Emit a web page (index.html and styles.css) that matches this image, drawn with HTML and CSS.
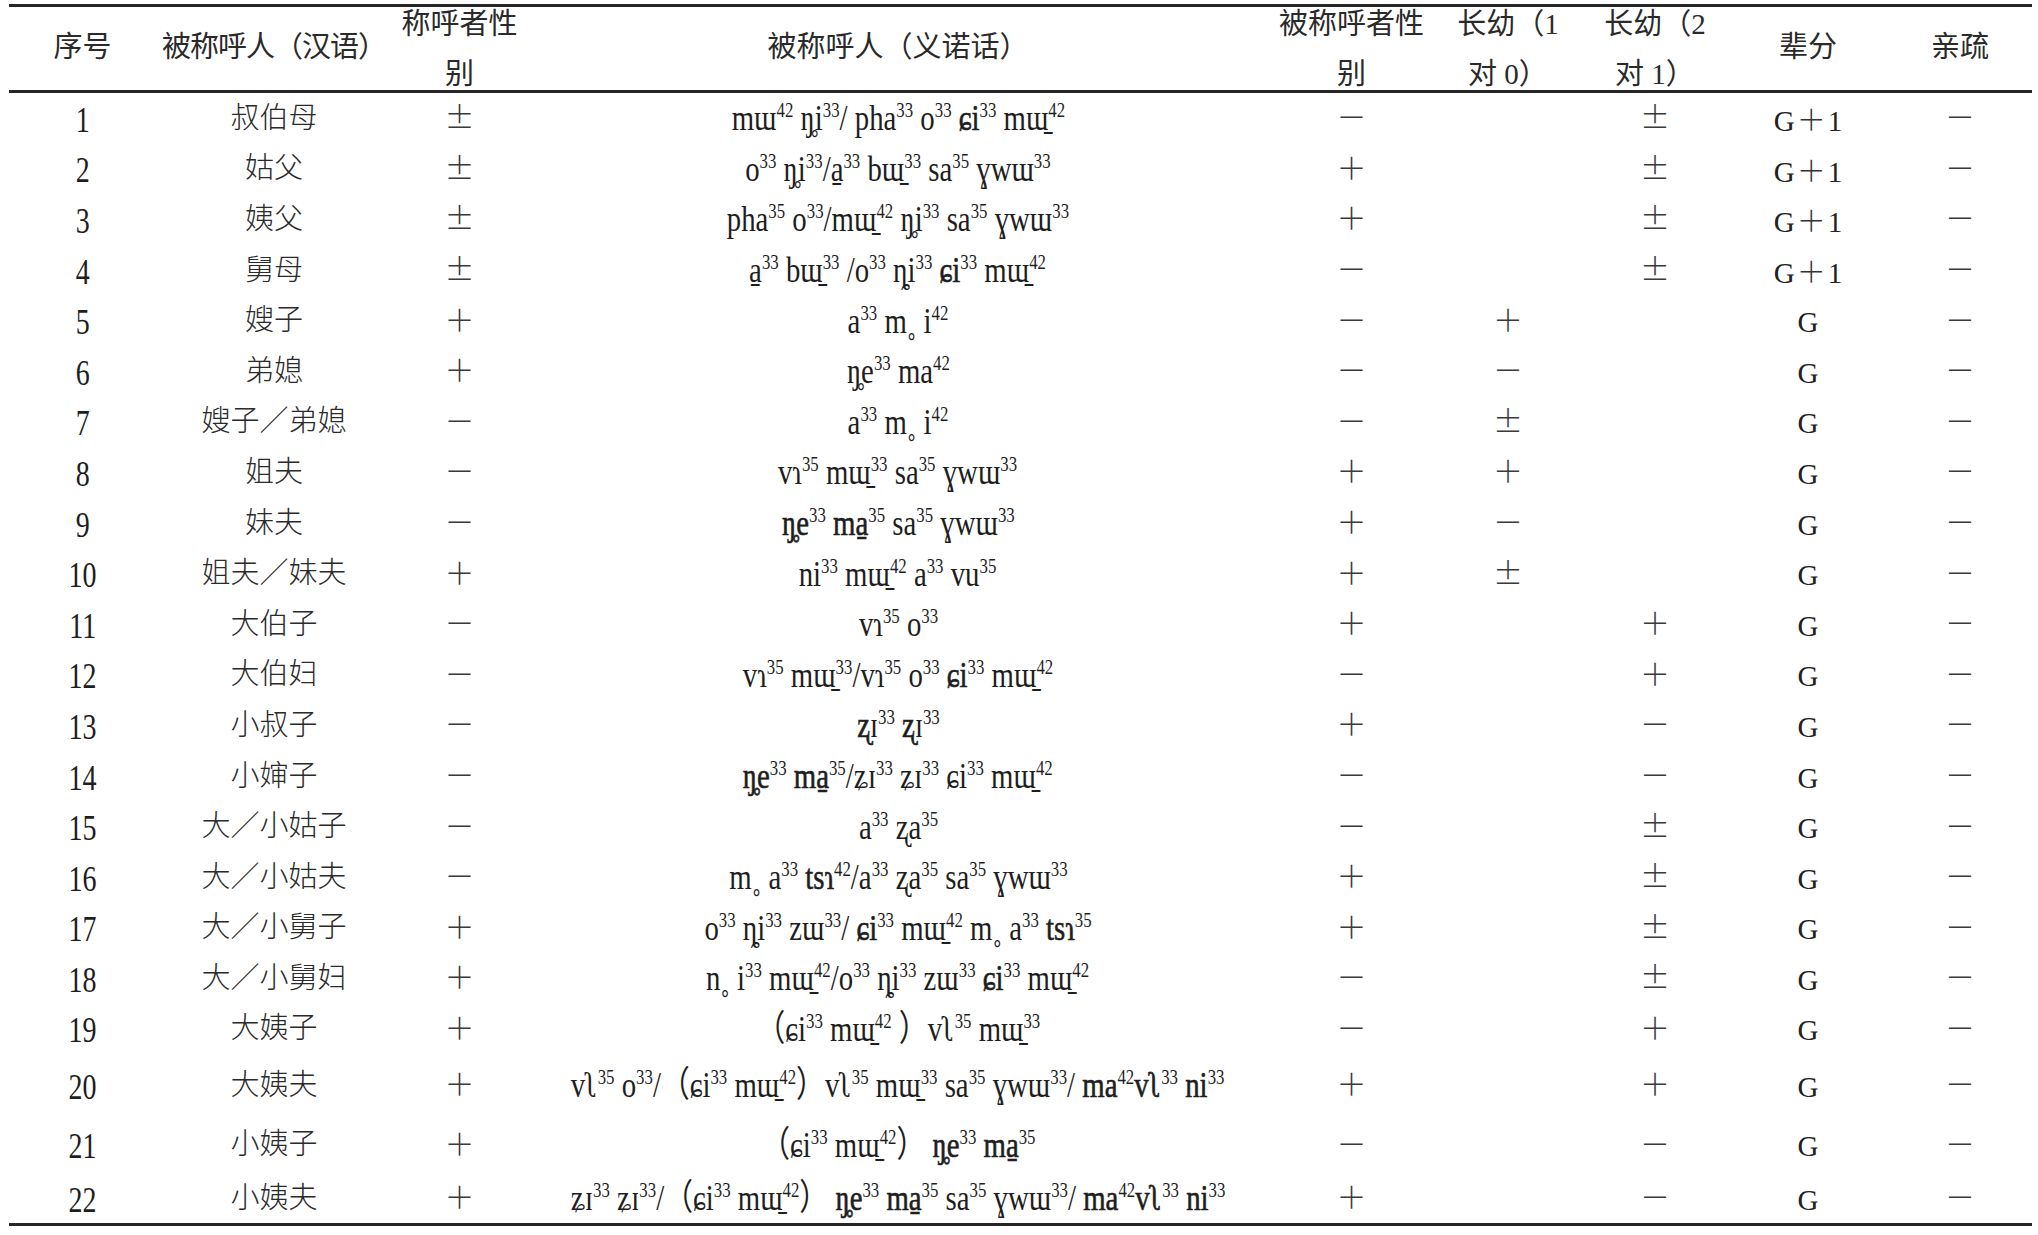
FILE: index.html
```html
<!DOCTYPE html>
<html lang="zh-CN">
<head>
<meta charset="utf-8">
<title>称呼表</title>
<link rel="stylesheet" href="styles.css">
</head>
<body>
<table class="kin">
  <colgroup>
    <col class="c1"><col class="c2"><col class="c3"><col class="c4"><col class="c5"><col class="c6"><col class="c7"><col class="c8"><col class="c9">
  </colgroup>
  <thead>
    <tr>
      <th><div class="hd">序号</div></th>
      <th><div class="hd h-tight">被称呼人（汉语）</div></th>
      <th><div class="hd"><span>称呼者性<br>别</span></div></th>
      <th><div class="hd">被称呼人（义诺话）</div></th>
      <th><div class="hd"><span>被称呼者性<br>别</span></div></th>
      <th><div class="hd"><span>长幼（1<br>对 0）</span></div></th>
      <th><div class="hd"><span>长幼（2<br>对 1）</span></div></th>
      <th><div class="hd">辈分</div></th>
      <th><div class="hd">亲疏</div></th>
    </tr>
  </thead>
  <tbody>
    <tr><td class="num"><span>1</span></td><td class="zh">叔伯母</td><td class="s">±</td><td class="ipa"><div class="line"><span class="t">mɯ<sup>42</sup> ŋ̥i<sup>33</sup>/ pha<sup>33</sup> o<sup>33</sup> <span class="bd">ɕi</span><sup>33</sup> mɯ̱<sup>42</sup></span></div></td><td class="s">－</td><td class="s"></td><td class="s">±</td><td class="g">G<span class="pl">＋</span>1</td><td class="s">－</td></tr>
    <tr><td class="num"><span>2</span></td><td class="zh">姑父</td><td class="s">±</td><td class="ipa"><div class="line"><span class="t">o<sup>33</sup> ŋ̥i<sup>33</sup>/a̱<sup>33</sup> bɯ̱<sup>33</sup> sa<sup>35</sup> ɣwɯ<sup>33</sup></span></div></td><td class="s">＋</td><td class="s"></td><td class="s">±</td><td class="g">G<span class="pl">＋</span>1</td><td class="s">－</td></tr>
    <tr><td class="num"><span>3</span></td><td class="zh">姨父</td><td class="s">±</td><td class="ipa"><div class="line"><span class="t">pha<sup>35</sup> o<sup>33</sup>/mɯ̱<sup>42</sup> ŋ̥i<sup>33</sup> sa<sup>35</sup> ɣwɯ<sup>33</sup></span></div></td><td class="s">＋</td><td class="s"></td><td class="s">±</td><td class="g">G<span class="pl">＋</span>1</td><td class="s">－</td></tr>
    <tr><td class="num"><span>4</span></td><td class="zh">舅母</td><td class="s">±</td><td class="ipa"><div class="line"><span class="t">a̱<sup>33</sup> bɯ̱<sup>33</sup> /o<sup>33</sup> ȵi<sup>33</sup> <span class="bd">ɕi</span><sup>33</sup> mɯ̱<sup>42</sup></span></div></td><td class="s">－</td><td class="s"></td><td class="s">±</td><td class="g">G<span class="pl">＋</span>1</td><td class="s">－</td></tr>
    <tr><td class="num"><span>5</span></td><td class="zh">嫂子</td><td class="s">＋</td><td class="ipa"><div class="line"><span class="t">a<sup>33</sup> m˳ i<sup>42</sup></span></div></td><td class="s">－</td><td class="s">＋</td><td class="s"></td><td class="g">G</td><td class="s">－</td></tr>
    <tr><td class="num"><span>6</span></td><td class="zh">弟媳</td><td class="s">＋</td><td class="ipa"><div class="line"><span class="t">ŋ̥e<sup>33</sup> ma<sup>42</sup></span></div></td><td class="s">－</td><td class="s">－</td><td class="s"></td><td class="g">G</td><td class="s">－</td></tr>
    <tr><td class="num"><span>7</span></td><td class="zh">嫂子／弟媳</td><td class="s">－</td><td class="ipa"><div class="line"><span class="t">a<sup>33</sup> m˳ i<sup>42</sup></span></div></td><td class="s">－</td><td class="s">±</td><td class="s"></td><td class="g">G</td><td class="s">－</td></tr>
    <tr><td class="num"><span>8</span></td><td class="zh">姐夫</td><td class="s">－</td><td class="ipa"><div class="line"><span class="t">vɿ<sup>35</sup> mɯ̱<sup>33</sup> sa<sup>35</sup> ɣwɯ<sup>33</sup></span></div></td><td class="s">＋</td><td class="s">＋</td><td class="s"></td><td class="g">G</td><td class="s">－</td></tr>
    <tr><td class="num"><span>9</span></td><td class="zh">妹夫</td><td class="s">－</td><td class="ipa"><div class="line"><span class="t"><span class="bd">ŋ̥e</span><sup>33</sup> <span class="bd">ma̱</span><sup>35</sup> sa<sup>35</sup> ɣwɯ<sup>33</sup></span></div></td><td class="s">＋</td><td class="s">－</td><td class="s"></td><td class="g">G</td><td class="s">－</td></tr>
    <tr><td class="num"><span>10</span></td><td class="zh">姐夫／妹夫</td><td class="s">＋</td><td class="ipa"><div class="line"><span class="t">ni<sup>33</sup> mɯ̱<sup>42</sup> a<sup>33</sup> vu<sup>35</sup></span></div></td><td class="s">＋</td><td class="s">±</td><td class="s"></td><td class="g">G</td><td class="s">－</td></tr>
    <tr><td class="num"><span>11</span></td><td class="zh">大伯子</td><td class="s">－</td><td class="ipa"><div class="line"><span class="t">vɿ<sup>35</sup> o<sup>33</sup></span></div></td><td class="s">＋</td><td class="s"></td><td class="s">＋</td><td class="g">G</td><td class="s">－</td></tr>
    <tr><td class="num"><span>12</span></td><td class="zh">大伯妇</td><td class="s">－</td><td class="ipa"><div class="line"><span class="t">vɿ<sup>35</sup> mɯ̱<sup>33</sup>/vɿ<sup>35</sup> o<sup>33</sup> <span class="bd">ɕi</span><sup>33</sup> mɯ̱<sup>42</sup></span></div></td><td class="s">－</td><td class="s"></td><td class="s">＋</td><td class="g">G</td><td class="s">－</td></tr>
    <tr><td class="num"><span>13</span></td><td class="zh">小叔子</td><td class="s">－</td><td class="ipa"><div class="line"><span class="t"><span class="bd">ʐ</span>ɪ<sup>33</sup> <span class="bd">ʐ</span>ɪ<sup>33</sup></span></div></td><td class="s">＋</td><td class="s"></td><td class="s">－</td><td class="g">G</td><td class="s">－</td></tr>
    <tr><td class="num"><span>14</span></td><td class="zh">小婶子</td><td class="s">－</td><td class="ipa"><div class="line"><span class="t"><span class="bd">ŋ̥e</span><sup>33</sup> <span class="bd">ma̱</span><sup>35</sup>/ʑɪ<sup>33</sup> ʑɪ<sup>33</sup> ɕi<sup>33</sup> mɯ̱<sup>42</sup></span></div></td><td class="s">－</td><td class="s"></td><td class="s">－</td><td class="g">G</td><td class="s">－</td></tr>
    <tr><td class="num"><span>15</span></td><td class="zh">大／小姑子</td><td class="s">－</td><td class="ipa"><div class="line"><span class="t">a<sup>33</sup> ʐa<sup>35</sup></span></div></td><td class="s">－</td><td class="s"></td><td class="s">±</td><td class="g">G</td><td class="s">－</td></tr>
    <tr><td class="num"><span>16</span></td><td class="zh">大／小姑夫</td><td class="s">－</td><td class="ipa"><div class="line"><span class="t">m˳ a<sup>33</sup> <span class="bd">tsɿ</span><sup>42</sup>/a<sup>33</sup> ʐa<sup>35</sup> sa<sup>35</sup> ɣwɯ<sup>33</sup></span></div></td><td class="s">＋</td><td class="s"></td><td class="s">±</td><td class="g">G</td><td class="s">－</td></tr>
    <tr><td class="num"><span>17</span></td><td class="zh">大／小舅子</td><td class="s">＋</td><td class="ipa"><div class="line"><span class="t">o<sup>33</sup> ȵi<sup>33</sup> zɯ<sup>33</sup>/ <span class="bd">ɕi</span><sup>33</sup> mɯ̱<sup>42</sup> m˳ a<sup>33</sup> <span class="bd">tsɿ</span><sup>35</sup></span></div></td><td class="s">＋</td><td class="s"></td><td class="s">±</td><td class="g">G</td><td class="s">－</td></tr>
    <tr><td class="num"><span>18</span></td><td class="zh">大／小舅妇</td><td class="s">＋</td><td class="ipa"><div class="line"><span class="t">n˳ i<sup>33</sup> mɯ̱<sup>42</sup>/o<sup>33</sup> ȵi<sup>33</sup> zɯ<sup>33</sup> <span class="bd">ɕi</span><sup>33</sup> mɯ̱<sup>42</sup></span></div></td><td class="s">－</td><td class="s"></td><td class="s">±</td><td class="g">G</td><td class="s">－</td></tr>
    <tr><td class="num"><span>19</span></td><td class="zh">大姨子</td><td class="s">＋</td><td class="ipa"><div class="line"><span class="t">（ɕi<sup>33</sup> mɯ̱<sup>42</sup> ）vʅ<sup>35</sup> mɯ̱<sup>33</sup></span></div></td><td class="s">－</td><td class="s"></td><td class="s">＋</td><td class="g">G</td><td class="s">－</td></tr>
    <tr class="r20"><td class="num"><span>20</span></td><td class="zh">大姨夫</td><td class="s">＋</td><td class="ipa"><div class="line"><span class="t">vʅ<sup>35</sup> o<sup>33</sup>/（ɕi<sup>33</sup> mɯ̱<sup>42</sup>）vʅ<sup>35</sup> mɯ̱<sup>33</sup> sa<sup>35</sup> ɣwɯ<sup>33</sup>/ <span class="bd">ma</span><sup>42</sup><span class="bd">vʅ</span><sup>33</sup> <span class="bd">ni</span><sup>33</sup></span></div></td><td class="s">＋</td><td class="s"></td><td class="s">＋</td><td class="g">G</td><td class="s">－</td></tr>
    <tr class="r21"><td class="num"><span>21</span></td><td class="zh">小姨子</td><td class="s">＋</td><td class="ipa"><div class="line"><span class="t">（ɕi<sup>33</sup> mɯ̱<sup>42</sup>） <span class="bd">ŋ̥e</span><sup>33</sup> <span class="bd">ma̱</span><sup>35</sup></span></div></td><td class="s">－</td><td class="s"></td><td class="s">－</td><td class="g">G</td><td class="s">－</td></tr>
    <tr class="r22"><td class="num"><span>22</span></td><td class="zh">小姨夫</td><td class="s">＋</td><td class="ipa"><div class="line"><span class="t">ʑɪ<sup>33</sup> ʑɪ<sup>33</sup>/（ɕi<sup>33</sup> mɯ̱<sup>42</sup>） <span class="bd">ŋ̥e</span><sup>33</sup> <span class="bd">ma̱</span><sup>35</sup> sa<sup>35</sup> ɣwɯ<sup>33</sup>/ <span class="bd">ma</span><sup>42</sup><span class="bd">vʅ</span><sup>33</sup> <span class="bd">ni</span><sup>33</sup></span></div></td><td class="s">＋</td><td class="s"></td><td class="s">－</td><td class="g">G</td><td class="s">－</td></tr>
  </tbody>
</table>
</body>
</html>
```

FILE: styles.css
```css
html, body {
  background: #ffffff;
}

body {
  margin: 0;
  padding: 4px 6px 0 9px;
  color: #222222;
  font-family: "Liberation Serif", "Noto Sans CJK SC", serif;
}

.kin {
  width: 2023px;
  table-layout: fixed;
  border-collapse: separate;
  border-spacing: 0;
  border-top: 3px solid #262626;
  border-bottom: 3px solid #262626;
}

.c1 { width: 147px; }
.c2 { width: 236px; }
.c3 { width: 135px; }
.c4 { width: 742px; }
.c5 { width: 165px; }
.c6 { width: 148px; }
.c7 { width: 146px; }
.c8 { width: 160px; }
.c9 { width: 144px; }

.kin th,
.kin td {
  padding: 0;
  text-align: center;
  vertical-align: middle;
  white-space: nowrap;
  overflow: visible;
}

.kin th {
  font-weight: normal;
  font-size: 29px;
  color: #2a2a2a;
  font-family: "Liberation Serif", "Noto Sans CJK SC", serif;
  border-bottom: 3px solid #262626;
}

.hd {
  height: 83px;
  display: flex;
  align-items: center;
  justify-content: center;
  line-height: 50px;
  position: relative;
  top: -2px;
}

.hd span {
  display: block;
  flex: none;
  position: relative;
  top: 2px;
}

.hd.h-tight {
  letter-spacing: -1px;
}

.kin tbody tr {
  height: 50.6px;
}

.kin tbody tr.r20 { height: 62px; }
.kin tbody tr.r21 { height: 57px; }
.kin tbody tr.r22 { height: 50px; }

.kin td {
  line-height: 1;
}

.num span {
  display: inline-block;
  font-size: 35px;
  transform: scaleX(0.8);
  position: relative;
  top: 2px;
  color: #1e1e1e;
}

.zh {
  font-family: "Noto Sans CJK SC", sans-serif;
  font-size: 29px;
  font-weight: 300;
  color: #2a2a2a;
}

.zh,
.s {
  position: relative;
  top: -3px;
}

.s {
  font-family: "Noto Sans CJK SC", sans-serif;
  font-size: 30px;
  font-weight: 300;
  color: #3a3a3a;
}

.g {
  font-size: 29px;
  color: #222222;
  padding-top: 4px !important;
}

.g .pl {
  font-family: "Noto Sans CJK SC", sans-serif;
  font-weight: 300;
  color: #333333;
  margin: 0 2px;
}

.ipa .line {
  display: flex;
  justify-content: center;
}

.ipa .t {
  display: inline-block;
  white-space: nowrap;
  font-size: 36px;
  line-height: 40px;
  transform: scaleX(0.8);
  font-family: "Liberation Serif", "DejaVu Serif", "Noto Sans CJK SC", serif;
  color: #1e1e1e;
}

.ipa sup {
  font-size: 21px;
  line-height: 0;
  vertical-align: 13px;
}

.ipa .bd {
  -webkit-text-stroke: 0.6px #1e1e1e;
}
```
